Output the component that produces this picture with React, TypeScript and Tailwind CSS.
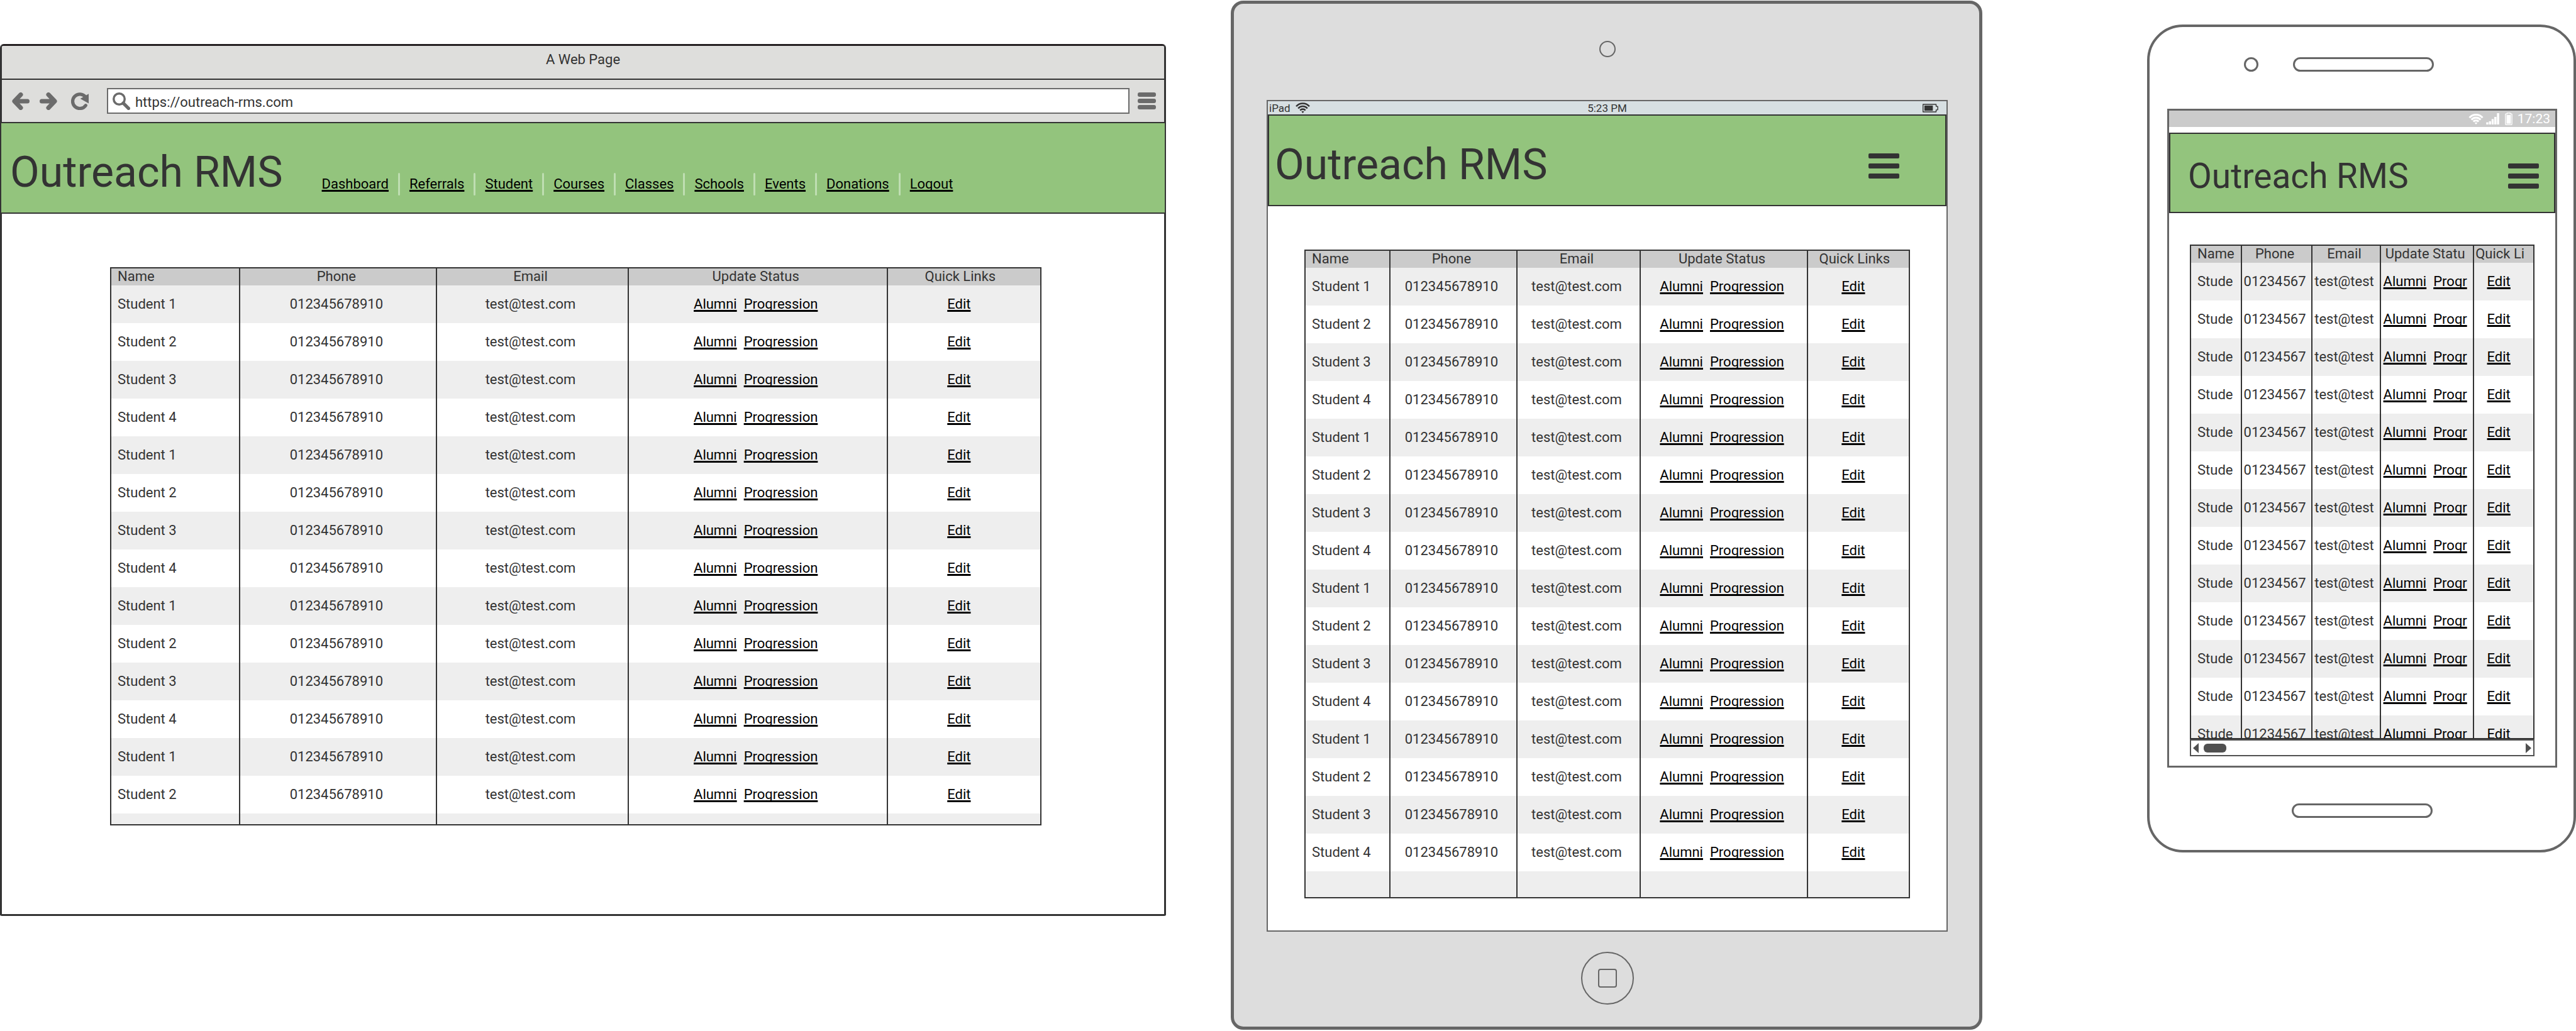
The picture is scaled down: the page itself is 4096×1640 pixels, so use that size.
import React from "react";

type Column = { label: string; width: string };

type TableProps = {
  columns: Column[];
  rows: string[];
  phone: string;
  email: string;
  progression: string;
  height: string;
  filler?: boolean;
};

const NAV = ["Dashboard", "Referrals", "Student", "Courses", "Classes", "Schools", "Events", "Donations", "Logout"];

const cycle = (count: number) => Array.from({ length: count }, (_, i) => `Student ${(i % 4) + 1}`);

const linkClass =
  "text-black underline decoration-[3px] underline-offset-[2px] [text-decoration-skip-ink:none]";

function StudentTable({ columns, rows, phone, email, progression, height, filler }: TableProps) {
  const cell = "border-r-2 border-[#333] p-0 pr-[6px] text-center font-normal";
  return (
    <div className={`overflow-hidden border-2 border-[#333] bg-white ${height}`}>
      <table
        aria-label="Students"
        className="w-full table-fixed border-separate border-spacing-0 whitespace-nowrap text-[22px] leading-[26px]"
      >
        <colgroup>
          {columns.map((c) => (
            <col key={c.label} className={c.width} />
          ))}
        </colgroup>
        <thead>
          <tr className="h-[27px] bg-[#cbcbcb] align-top">
            {columns.map((c, i) => (
              <th
                key={c.label}
                scope="col"
                className={
                  i === 0
                    ? "border-r-2 border-[#333] p-0 pl-[10px] text-left font-normal"
                    : i === 4
                      ? "p-0 pr-[12px] text-center font-normal"
                      : cell
                }
              >
                {c.label}
              </th>
            ))}
          </tr>
        </thead>
        <tbody>
          {rows.map((name, i) => (
            <tr key={i} className="h-[60px] odd:bg-[#eeeeee]">
              <td className="border-r-2 border-[#333] p-0 pl-[10px] text-left">{name}</td>
              <td className={cell}>{phone}</td>
              <td className={cell}>{email}</td>
              <td className={cell}>
                <a href="#alumni" className={linkClass}>
                  Alumni
                </a>
                <a href="#progression" className={`ml-[11px] ${linkClass}`}>
                  {progression}
                </a>
              </td>
              <td className="p-0 pr-[16px] text-center">
                <a href="#edit" className={linkClass}>
                  Edit
                </a>
              </td>
            </tr>
          ))}
          {filler && (
            <tr className="h-[60px] odd:bg-[#eeeeee]">
              <td className={cell} />
              <td className={cell} />
              <td className={cell} />
              <td className={cell} />
              <td />
            </tr>
          )}
        </tbody>
      </table>
    </div>
  );
}

function MenuButton() {
  return (
    <button type="button" aria-label="Menu" className="flex w-[49px] flex-col gap-2">
      <span className="h-2 rounded-[2px] bg-[#333]" />
      <span className="h-2 rounded-[2px] bg-[#333]" />
      <span className="h-2 rounded-[2px] bg-[#333]" />
    </button>
  );
}

function WifiIcon({ className, stroke }: { className: string; stroke: number }) {
  return (
    <svg viewBox="0 0 27 20" className={className} fill="none" stroke="currentColor" strokeWidth={stroke} aria-hidden="true">
      <path d="M1.2 7.4A16.2 16.2 0 0 1 25.8 7.4" />
      <path d="M4.9 11.2A11.2 11.2 0 0 1 22.1 11.2" />
      <path d="M8.6 14.8A6.4 6.4 0 0 1 18.4 14.8" />
      <path d="M11 17.2Q13.5 15.4 16 17.2L13.5 20Z" fill="currentColor" stroke="none" />
    </svg>
  );
}

function ArrowIcon({ className }: { className: string }) {
  return (
    <svg viewBox="0 0 32 32" className={className} fill="none" stroke="#6b6b6b" strokeWidth="8" strokeLinecap="round" strokeLinejoin="round" aria-hidden="true">
      <path d="M16 4L4.5 16L16 28M28 16H6" />
    </svg>
  );
}

function Browser() {
  return (
    <section aria-label="Desktop" className="col-start-1 mt-[70px] rounded-t-[6px] rounded-b-[3px] border-[3px] border-[#333] border-t-[#231f20] bg-white">
      <div className="h-[54px] rounded-t-[3px] border-b-2 border-[#333] bg-[#dededc] pt-[9px] text-center text-[22px] leading-[26px]">
        A Web Page
      </div>
      <div className="flex h-[67px] items-center bg-[#dededc] pr-[13px] pl-4">
        <button type="button" aria-label="Back">
          <ArrowIcon className="size-7" />
        </button>
        <button type="button" aria-label="Forward" className="ml-4">
          <ArrowIcon className="size-7 rotate-180" />
        </button>
        <button type="button" aria-label="Reload" className="ml-[22px]">
          <svg viewBox="0 0 32 32" className="size-7" aria-hidden="true">
            <path d="M26 8A13 13 0 1 0 26.6 23.6" fill="none" stroke="#6b6b6b" strokeWidth="6" strokeLinecap="round" />
            <path d="M32 2.7V20L16.7 11.3Z" fill="#6b6b6b" />
          </svg>
        </button>
        <label className="ml-[29px] flex h-[41px] flex-1 items-center border-2 border-[#6b6b6b] bg-white pl-[7px]">
          <svg viewBox="0 0 32 32" className="size-7" fill="none" stroke="#6b6b6b" aria-hidden="true">
            <circle cx="12" cy="12" r="10" strokeWidth="4" />
            <path d="M19.5 19.5L29 29" strokeWidth="6" strokeLinecap="round" />
          </svg>
          <input
            type="text"
            aria-label="Address"
            defaultValue="https://outreach-rms.com"
            className="ml-2 min-w-0 flex-1 bg-transparent pt-1 text-[22px] leading-[26px] outline-none"
          />
        </label>
        <button type="button" aria-label="Browser menu" className="ml-[13px] flex w-[29px] flex-col gap-[3px]">
          <span className="h-[7px] rounded-[3px] bg-[#6b6b6b]" />
          <span className="h-[7px] rounded-[3px] bg-[#6b6b6b]" />
          <span className="h-[7px] rounded-[3px] bg-[#6b6b6b]" />
        </button>
      </div>
      <header className="-mx-[3px] flex h-[146px] items-end border-2 border-[#333] bg-[#93c47d] pl-[14px]">
        <h1 className="pb-[30px] text-[68px] leading-none whitespace-nowrap">Outreach RMS</h1>
        <nav aria-label="Main" className="ml-[62px] pb-[27px]">
          <ul className="flex text-[22px] leading-9">
            {NAV.map((item, i) => (
              <li key={item} className="flex">
                {i > 0 && <span className="mx-[15px] w-[3px] rounded-full bg-[#bfdeb2]" />}
                <a href={`#${item.toLowerCase()}`} className={linkClass}>
                  {item}
                </a>
              </li>
            ))}
          </ul>
        </nav>
      </header>
      <main className="pt-[85px] pr-[195px] pb-[141px] pl-[172px]">
        <StudentTable
          columns={[
            { label: "Name", width: "w-[13.9%]" },
            { label: "Phone", width: "w-[21.2%]" },
            { label: "Email", width: "w-[20.6%]" },
            { label: "Update Status", width: "w-[27.9%]" },
            { label: "Quick Links", width: "w-[16.4%]" },
          ]}
          rows={cycle(14)}
          phone="012345678910"
          email="test@test.com"
          progression="Progression"
          height="h-[888px]"
          filler
        />
      </main>
    </section>
  );
}

function Tablet() {
  return (
    <section aria-label="Tablet" className="col-start-3 mt-px flex flex-col rounded-[20px] border-[5px] border-[#666] bg-[#dddddd] pt-[59px] pr-[50px] pb-[35px] pl-[52px]">
      <span className="size-[26px] self-center rounded-full border-2 border-[#666]" />
      <div className="mt-[68px] border-2 border-[#666] bg-white">
        <div className="grid h-[21px] grid-cols-3 items-center bg-[#d7dfe2] pr-[13px] pl-[2px] text-[17px] leading-5">
          <span className="flex items-center gap-2">
            iPad
            <WifiIcon className="h-[17px] w-[23px]" stroke={3} />
          </span>
          <span className="pl-[11px] text-center">5:23 PM</span>
          <svg viewBox="0 0 30 16" className="h-[14px] w-[26px] justify-self-end" aria-hidden="true">
            <path d="M2 1H26V4.5L29 5V11L26 11.5V15H2Z" fill="none" stroke="#333" strokeWidth="1.6" strokeLinejoin="round" />
            <rect x="4.5" y="3.2" width="15.5" height="9.6" fill="#333" />
          </svg>
        </div>
        <header className="flex h-[146px] items-end justify-between border-2 border-[#333] bg-[#93c47d] pr-[73px] pl-[9px]">
          <h1 className="pb-[30px] text-[68px] leading-none whitespace-nowrap">Outreach RMS</h1>
          <div className="pb-[42px]">
            <MenuButton />
          </div>
        </header>
        <main className="px-[58px] pt-[69px] pb-[51px]">
          <StudentTable
            columns={[
              { label: "Name", width: "w-[14.1%]" },
              { label: "Phone", width: "w-[21%]" },
              { label: "Email", width: "w-[20.5%]" },
              { label: "Update Status", width: "w-[27.7%]" },
              { label: "Quick Links", width: "w-[16.7%]" },
            ]}
            rows={cycle(16)}
            phone="012345678910"
            email="test@test.com"
            progression="Progression"
            height="h-[1032px]"
            filler
          />
        </main>
      </div>
      <button type="button" aria-label="Home" className="mt-8 flex size-[84px] items-center justify-center self-center rounded-full border-2 border-[#666]">
        <span className="size-[30px] rounded-[4px] border-2 border-[#666]" />
      </button>
    </section>
  );
}

function Phone() {
  return (
    <section aria-label="Phone" className="col-start-5 mt-[39px] flex flex-col rounded-[57px] border-4 border-[#666] bg-white pt-[48px] pr-[26px] pb-[51px] pl-7">
      <div className="grid grid-cols-[1fr_224px_1fr] items-center pl-1">
        <span className="mr-[55px] size-[23px] justify-self-end rounded-full border-[3px] border-[#666]" />
        <span className="h-[23px] rounded-full border-[3px] border-[#666]" />
      </div>
      <div className="mt-[59px] border-[3px] border-[#666] bg-white">
        <div className="flex h-[26px] items-center justify-end bg-[#cbcbcb] pr-2 text-[21px] leading-6 text-white">
          <WifiIcon className="h-[17px] w-6" stroke={3.6} />
          <svg viewBox="0 0 24 21" className="ml-1 h-[18px] w-[21px]" fill="currentColor" aria-hidden="true">
            <rect x="0" y="17" width="4" height="4" />
            <rect x="5" y="15" width="4" height="6" />
            <rect x="10" y="11" width="4" height="10" />
            <rect x="15" y="7" width="4" height="14" />
            <rect x="20" y="0" width="4" height="21" />
          </svg>
          <svg viewBox="0 0 14 24" className="ml-[9px] h-5 w-3" fill="none" stroke="currentColor" strokeWidth="1.5" aria-hidden="true">
            <path d="M4 2.5V1H10V2.5H12.2Q13.2 2.5 13.2 3.5V22Q13.2 23.2 12.2 23.2H1.8Q.8 23.2 .8 22V3.5Q.8 2.5 1.8 2.5Z" />
            <rect x="2.8" y="4.5" width="8.4" height="16.8" fill="currentColor" stroke="none" />
          </svg>
          <span className="ml-2">17:23</span>
        </div>
        <header className="mt-[9px] flex h-[128px] items-end justify-between border-2 border-[#333] bg-[#93c47d] pr-6 pl-7">
          <h1 className="pb-[29px] text-[55px] leading-none whitespace-nowrap">Outreach RMS</h1>
          <div className="pb-[37px]">
            <MenuButton />
          </div>
        </header>
        <main className="px-[33px] pt-[50px] pb-[15px]">
          <StudentTable
            columns={[
              { label: "Name", width: "w-[14.9%]" },
              { label: "Phone", width: "w-[20.6%]" },
              { label: "Email", width: "w-[20%]" },
              { label: "Update Statu", width: "w-[27.3%]" },
              { label: "Quick Li", width: "w-[17.2%]" },
            ]}
            rows={Array.from({ length: 13 }, () => "Stude")}
            phone="01234567"
            email="test@test"
            progression="Progr"
            height="h-[787px]"
          />
          <div className="flex h-[27px] items-center border-2 border-[#505050] pr-[3px] pl-[3px]">
            <button type="button" aria-label="Scroll left">
              <svg viewBox="0 0 9 16" className="h-4 w-[9px]" aria-hidden="true">
                <path d="M9 0V16L0 8Z" fill="#505050" />
              </svg>
            </button>
            <span className="ml-2 h-[14px] w-9 rounded-[6px] bg-[#505050]" />
            <button type="button" aria-label="Scroll right" className="ml-auto">
              <svg viewBox="0 0 9 16" className="h-4 w-[9px]" aria-hidden="true">
                <path d="M0 0V16L9 8Z" fill="#505050" />
              </svg>
            </button>
          </div>
        </main>
      </div>
      <button type="button" aria-label="Home" className="mt-[57px] h-[23px] w-[224px] self-center rounded-full border-[3px] border-[#666]" />
    </section>
  );
}

export default function App() {
  return (
    <div className="grid min-h-screen grid-cols-[1854fr_103fr_1195fr_262fr_682fr] items-start bg-white font-[Roboto,sans-serif] text-[#333]">
      <Browser />
      <Tablet />
      <Phone />
    </div>
  );
}
